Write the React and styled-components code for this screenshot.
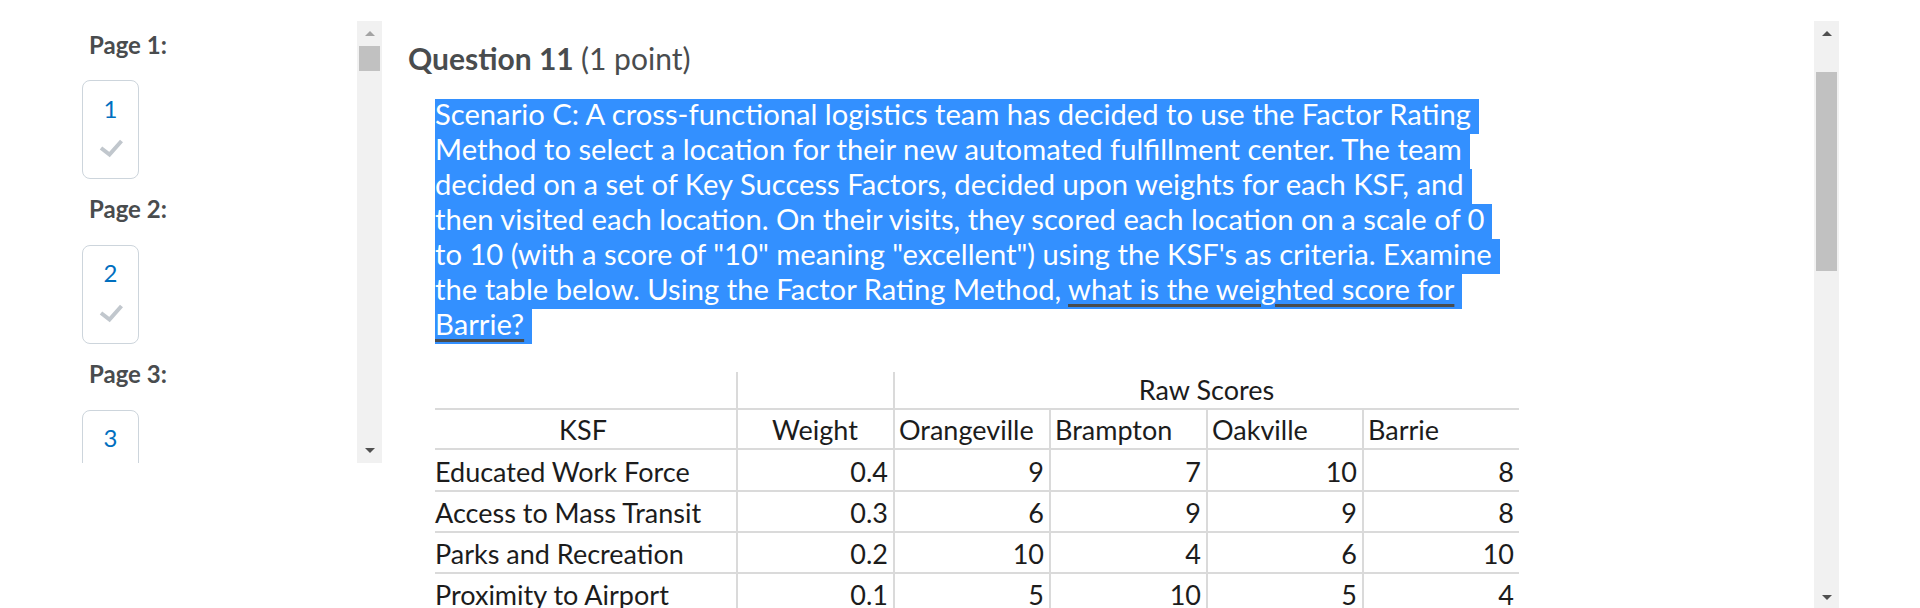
import React from 'react';
import styled, { createGlobalStyle } from 'styled-components';

const GlobalStyle = createGlobalStyle`
  html, body {
    margin: 0;
    padding: 0;
    background: #ffffff;
    overflow: hidden;
  }
  body {
    font-family: Lato, "Noto Sans", sans-serif;
    color: #494c4e;
  }
`;

// page frame
const Page = styled.div`
  display: flex;
  width: 1920px;
  height: 608px;
  padding-top: 21px;
  box-sizing: border-box;
  overflow: hidden;
`;

// left navigation
const NavPane = styled.aside`
  display: flex;
  flex: none;
  width: 382px;
  height: 442px;
`;

const NavList = styled.div`
  flex: 1;
  overflow: hidden;
  padding: 9.6px 0 0 82px;
`;

const PageLabel = styled.div`
  font-size: 24px;
  font-weight: 700;
  line-height: 28.8px;
  margin: 0 0 20.6px 7px;
`;

const PageBox = styled.div`
  display: flex;
  flex-direction: column;
  align-items: center;
  width: 57px;
  height: 99px;
  box-sizing: border-box;
  border: 1px solid #cdd5dc;
  border-radius: 8px;
  padding-top: 13.6px;
  margin-bottom: 16.5px;
`;

const PageNumber = styled.span`
  font-size: 24px;
  line-height: 28.8px;
  color: #006fbf;
`;

const CheckIcon = styled.svg`
  margin-top: 14.6px;
`;

// fake scrollbars
const ScrollTrack = styled.div`
  display: flex;
  flex-direction: column;
  flex: none;
  width: 25px;
  height: ${p => p.$height}px;
  background: #f1f1f1;
`;

const ScrollButton = styled.div`
  display: flex;
  align-items: center;
  justify-content: center;
  flex: none;
  height: 25px;
`;

const Arrow = styled.span`
  width: 0;
  height: 0;
  border-left: 5px solid transparent;
  border-right: 5px solid transparent;
  ${p => p.$down
    ? `border-top: 5px solid ${p.$color};`
    : `border-bottom: 5px solid ${p.$color};`}
`;

const Thumb = styled.div`
  flex: none;
  margin: ${p => p.$offset}px 2px 0;
  height: ${p => p.$size}px;
  background: #c1c1c1;
`;

const TrackFill = styled.div`
  flex: 1;
`;

// main question area
const MainPane = styled.main`
  display: flex;
  flex: 1;
  padding-right: 81px;
`;

const Content = styled.section`
  flex: 1;
  overflow: hidden;
  padding-left: 26px;
`;

const QuestionTitle = styled.h2`
  margin: 18.7px 0 0;
  font-size: 30px;
  line-height: 36px;
  font-weight: 700;
  color: #494c4e;
`;

const Points = styled.span`
  font-weight: 400;
`;

const Body = styled.div`
  margin: 23.3px 0 0 27px;
  font-size: 29.2px;
  color: #ffffff;
`;

const SelectedLine = styled.div`
  width: fit-content;
  white-space: nowrap;
  line-height: 29.7px;
  padding: 0 8px 5.3px 0;
  background: #3390ff;
`;

const Underlined = styled.span`
  text-decoration: underline;
  text-decoration-color: #494c4e;
  text-decoration-thickness: 2.5px;
  text-underline-offset: 4px;
`;

// spreadsheet table
const ScoreTable = styled.table`
  margin: 28px 0 0 27px;
  width: 1084px;
  table-layout: fixed;
  border-collapse: separate;
  border-spacing: 0;
  font-size: 27px;
  color: #1c1c1c;
`;

const Cell = styled.td`
  box-sizing: border-box;
  height: ${p => p.$h}px;
  padding: 0 5px 3px 4px;
  vertical-align: bottom;
  line-height: 31px;
  white-space: nowrap;
  text-align: ${p => p.$align || 'left'};
  border-bottom: 2px solid #dadada;
  border-right: ${p => (p.$last ? 'none' : '2px solid #dadada')};
  &:first-child {
    padding-left: 0;
  }
`;

const Check = () => (
  <CheckIcon width="26" height="20" viewBox="0 0 26 20">
    <polyline points="3,10 11.5,16.5 23.5,3" fill="none" stroke="#c1c7cd" strokeWidth="4" />
  </CheckIcon>
);

const Scrollbar = ({ height, offset, size, upColor, downColor }) => (
  <ScrollTrack $height={height}>
    <ScrollButton><Arrow $color={upColor} /></ScrollButton>
    <Thumb $offset={offset} $size={size} />
    <TrackFill />
    <ScrollButton><Arrow $down $color={downColor} /></ScrollButton>
  </ScrollTrack>
);

const pages = [
  { label: 'Page 1:', num: 1, done: true },
  { label: 'Page 2:', num: 2, done: true },
  { label: 'Page 3:', num: 3, done: false },
];

const rows = [
  ['Educated Work Force', '0.4', '9', '7', '10', '8'],
  ['Access to Mass Transit', '0.3', '6', '9', '9', '8'],
  ['Parks and Recreation', '0.2', '10', '4', '6', '10'],
  ['Proximity to Airport', '0.1', '5', '10', '5', '4'],
];

const rowHeights = [42, 41, 41, 41];

export default function App() {
  return (
    <>
      <GlobalStyle />
      <Page>
        <NavPane>
          <NavList>
            {pages.map(p => (
              <div key={p.num}>
                <PageLabel>{p.label}</PageLabel>
                <PageBox>
                  <PageNumber>{p.num}</PageNumber>
                  {p.done && <Check />}
                </PageBox>
              </div>
            ))}
          </NavList>
          <Scrollbar height={442} offset={0} size={25} upColor="#a3a3a3" downColor="#505050" />
        </NavPane>

        <MainPane>
          <Content>
            <QuestionTitle>
              Question 11 <Points>(1 point)</Points>
            </QuestionTitle>

            <Body>
              <SelectedLine>Scenario C: A cross-functional logistics team has decided to use the Factor Rating</SelectedLine>
              <SelectedLine>Method to select a location for their new automated fulfillment center. The team</SelectedLine>
              <SelectedLine>decided on a set of Key Success Factors, decided upon weights for each KSF, and</SelectedLine>
              <SelectedLine>then visited each location. On their visits, they scored each location on a scale of 0</SelectedLine>
              <SelectedLine>to 10 (with a score of "10" meaning "excellent") using the KSF's as criteria. Examine</SelectedLine>
              <SelectedLine>the table below. Using the Factor Rating Method, <Underlined>what is the weighted score for</Underlined></SelectedLine>
              <SelectedLine><Underlined>Barrie?</Underlined></SelectedLine>
            </Body>

            <ScoreTable>
              <colgroup>
                <col style={{ width: 303 }} />
                <col style={{ width: 157 }} />
                <col style={{ width: 156 }} />
                <col style={{ width: 157 }} />
                <col style={{ width: 156 }} />
                <col style={{ width: 155 }} />
              </colgroup>
              <tbody>
                <tr>
                  <Cell $h={38} />
                  <Cell $h={38} />
                  <Cell $h={38} colSpan={4} $align="center" $last>Raw Scores</Cell>
                </tr>
                <tr>
                  <Cell $h={40} $align="center">KSF</Cell>
                  <Cell $h={40} $align="center">Weight</Cell>
                  <Cell $h={40}>Orangeville</Cell>
                  <Cell $h={40}>Brampton</Cell>
                  <Cell $h={40}>Oakville</Cell>
                  <Cell $h={40} $last>Barrie</Cell>
                </tr>
                {rows.map((r, i) => (
                  <tr key={r[0]}>
                    {r.map((v, j) => (
                      <Cell
                        key={j}
                        $h={rowHeights[i]}
                        $align={j === 0 ? 'left' : 'right'}
                        $last={j === r.length - 1}
                      >
                        {v}
                      </Cell>
                    ))}
                  </tr>
                ))}
              </tbody>
            </ScoreTable>
          </Content>
          <Scrollbar height={589} offset={26} size={199} upColor="#505050" downColor="#505050" />
        </MainPane>
      </Page>
    </>
  );
}
